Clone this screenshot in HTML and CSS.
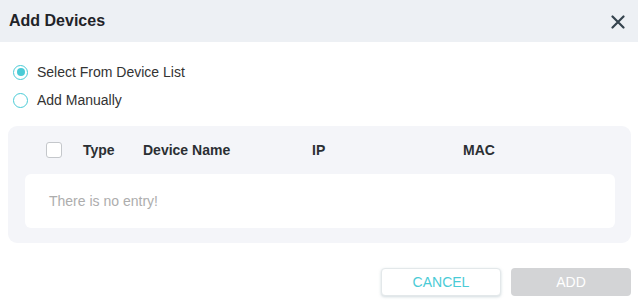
FILE: index.html
```html
<!DOCTYPE html>
<html>
<head>
<meta charset="utf-8">
<link rel="stylesheet" href="styles.css">
</head>
<body>
<div class="dialog">
  <div class="dlg-header">
    <span class="dlg-title">Add Devices</span>
    <svg class="close" width="14" height="14" viewBox="0 0 14 14"><path d="M1.5 1.5 L12.5 12.5 M12.5 1.5 L1.5 12.5" stroke="#35434e" stroke-width="2.2" stroke-linecap="round" fill="none"/></svg>
  </div>
  <div class="radios">
    <label class="radio-row"><span class="radio checked"></span><span>Select From Device List</span></label>
    <label class="radio-row"><span class="radio"></span><span>Add Manually</span></label>
  </div>
  <div class="panel">
    <div class="thead">
      <span class="cb"></span>
      <span>Type</span>
      <span>Device Name</span>
      <span>IP</span>
      <span>MAC</span>
    </div>
    <div class="tbody">There is no entry!</div>
  </div>
  <div class="footer">
    <button class="btn cancel">CANCEL</button>
    <button class="btn add">ADD</button>
  </div>
</div>
</body>
</html>
```

FILE: styles.css
```css
html, body {
  margin: 0;
  padding: 0;
  background: #ffffff;
  font-family: "Liberation Sans", Arial, sans-serif;
}
.dialog {
  width: 638px;
  height: 302px;
  overflow: hidden;
}
.dlg-header {
  height: 42px;
  background: #edf0f4;
  display: flex;
  align-items: center;
  justify-content: space-between;
  padding: 0 13px 0 9px;
}
.dlg-title {
  font-size: 16px;
  font-weight: bold;
  color: #1f2328;
}
.close {
  display: block;
  margin-top: 1px;
}
.radios {
  margin-top: 16px;
  padding-left: 13px;
}
.radio-row {
  display: flex;
  align-items: center;
  height: 28px;
  font-size: 14px;
  color: #333;
  gap: 9px;
}
.radio {
  width: 15px;
  height: 15px;
  box-sizing: border-box;
  border: 1.5px solid #4acbd6;
  border-radius: 50%;
  display: flex;
  align-items: center;
  justify-content: center;
  background: #fff;
}
.radio.checked::after {
  content: "";
  width: 8px;
  height: 8px;
  border-radius: 50%;
  background: #4acbd6;
}
.panel {
  margin: 12px 7px 0 8px;
  background: #f4f5f9;
  border-radius: 9px;
  padding-bottom: 15px;
}
.thead {
  height: 48px;
  display: grid;
  grid-template-columns: 37px 60px 169px 151px 1fr;
  align-items: center;
  padding-left: 38px;
  font-size: 14px;
  font-weight: bold;
  color: #2b2f33;
}
.cb {
  width: 16px;
  height: 16px;
  box-sizing: border-box;
  border: 1px solid #c4c7cb;
  border-radius: 3px;
  background: #fff;
}
.tbody {
  margin: 0 16px 0 17px;
  height: 54px;
  background: #ffffff;
  border-radius: 6px;
  display: flex;
  align-items: center;
  padding-left: 24px;
  font-size: 14px;
  color: #adadad;
}
.footer {
  display: flex;
  justify-content: flex-end;
  gap: 10px;
  margin-top: 25px;
  padding-right: 7px;
}
.btn {
  width: 120px;
  height: 28px;
  border-radius: 4px;
  font-family: "Liberation Sans", Arial, sans-serif;
  font-size: 14px;
  padding: 0;
  cursor: pointer;
}
.cancel {
  background: #fff;
  color: #4acbd6;
  border: 1px solid #e3e8ea;
  box-shadow: 0 1px 3px rgba(120, 150, 160, 0.35);
}
.add {
  background: #d3d4d6;
  color: #ffffff;
  border: none;
}
```
